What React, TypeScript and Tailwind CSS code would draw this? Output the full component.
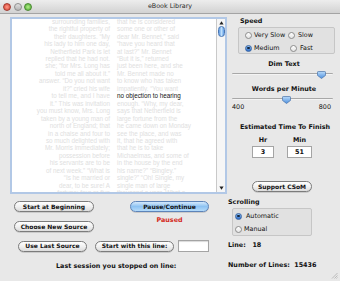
import React from "react";

const UI = { fontFamily: '"DejaVu Sans", "Liberation Sans", sans-serif' };
const BOOK = { fontFamily: '"Liberation Sans", Arial, sans-serif' };

const lines: [string, string][] = [
  ["this truth is so well", "fixed in the minds of the"],
  ["surrounding families,", "that he is considered"],
  ["the rightful property of", "some one or other of"],
  ["their daughters. \u201cMy", "dear Mr. Bennet,\u201d said"],
  ["his lady to him one day,", "\u201chave you heard that"],
  ["Netherfield Park is let", "at last?\u201d Mr. Bennet"],
  ["replied that he had not.", "\u201cBut it is,\u201d returned"],
  ["she; \u201cfor Mrs. Long has", "just been here, and she"],
  ["told me all about it.\u201d", "Mr. Bennet made no"],
  ["answer. \u201cDo you not want", "to know who has taken"],
  ["it?\u201d cried his wife", "impatiently. \u201cYou want"],
  ["to tell me, and I have", "no objection to hearing"],
  ["it.\u201d This was invitation", "enough. \u201cWhy, my dear,"],
  ["you must know, Mrs. Long", "says that Netherfield is"],
  ["taken by a young man of", "large fortune from the"],
  ["north of England; that", "he came down on Monday"],
  ["in a chaise and four to", "see the place, and was"],
  ["so much delighted with", "it, that he agreed with"],
  ["Mr. Morris immediately;", "that he is to take"],
  ["possession before", "Michaelmas, and some of"],
  ["his servants are to be", "in the house by the end"],
  ["of next week.\u201d \u201cWhat is", "his name?\u201d \u201cBingley.\u201d"],
  ["\u201cIs he married or", "single?\u201d \u201cOh! Single, my"],
  ["dear, to be sure! A", "single man of large"],
  ["fortune; four or five", "thousand a year. What a"],
];

function Radio({ checked }: { checked?: boolean }) {
  return checked ? (
    <span className="w-[7px] h-[7px] shrink-0 rounded-full bg-linear-to-b from-[#8cc0f2] to-[#2e6cc9] border border-[#3a66a3] flex items-center justify-center">
      <span className="w-[2.5px] h-[2.5px] rounded-full bg-[#15243a]" />
    </span>
  ) : (
    <span className="w-[7px] h-[7px] shrink-0 rounded-full bg-linear-to-b from-white to-[#e4e4e4] border border-[#8c8c8c]" />
  );
}

function Btn({ label, cls, blue }: { label: string; cls: string; blue?: boolean }) {
  return (
    <div
      className={
        "h-[11px] rounded-full border flex items-center justify-center text-[6px] font-bold leading-none text-[#111] shadow-[0_0.5px_0.5px_rgba(0,0,0,0.25)] " +
        (blue
          ? "border-[#5d84b9] bg-linear-to-b from-[#d4e9fc] via-[#8ec3f2] to-[#b5dbfa] "
          : "border-[#7c7c7c] bg-linear-to-b from-white via-[#f1f1f1] to-[#dcdcdc] ") +
        cls
      }
    >
      {label}
    </div>
  );
}

function Thumb() {
  return (
    <svg width="9" height="8" viewBox="0 0 9 8" className="block">
      <defs>
        <linearGradient id="tg" x1="0" y1="0" x2="0" y2="1">
          <stop offset="0" stopColor="#b9dbfb" />
          <stop offset="1" stopColor="#4d8fdd" />
        </linearGradient>
      </defs>
      <path d="M0.5 1.2 Q0.5 0.5 1.2 0.5 H7.8 Q8.5 0.5 8.5 1.2 V4.4 L4.5 7.5 L0.5 4.4 Z" fill="url(#tg)" stroke="#4a72a8" strokeWidth="0.7" />
    </svg>
  );
}

function Slider({ pos }: { pos: number }) {
  return (
    <div className="relative ml-[4px] w-[101px] h-[9px]">
      <div className="absolute left-0 right-0 top-[3.5px] h-[2px] rounded-full bg-[#a8a8a8] border-b border-[#f4f4f4]" />
      <div className="absolute top-[2px]" style={{ left: pos }}>
        <Thumb />
      </div>
    </div>
  );
}

export default function App() {
  return (
    <div className="w-[340px] h-[281px] bg-[#e8e8e8] flex flex-col overflow-hidden text-[#111]" style={UI}>
      {/* Title bar */}
      <div className="relative h-[14px] shrink-0 bg-linear-to-b from-[#ededed] to-[#d2d2d2] border-b border-[#a4a4a4] flex items-center">
        <div className="flex items-center gap-[2.5px] pl-[3px]">
          <span className="w-[8px] h-[8px] rounded-full bg-radial from-[#ff9a8a] to-[#d2372a] border border-[#a23a30]" />
          <span className="w-[8px] h-[8px] rounded-full bg-linear-to-b from-[#e0e0e0] to-[#b4b4b4] border border-[#8f8f8f]" />
          <span className="w-[8px] h-[8px] rounded-full bg-radial from-[#b6f08a] to-[#3fa52a] border border-[#4c8a33]" />
        </div>
        <div className="absolute inset-0 flex items-center justify-center text-[6.4px] text-[#2a2a2a] leading-none">
          eBook Library
        </div>
      </div>

      <div className="flex flex-1">
        {/* Left column */}
        <div className="w-[228px] flex flex-col">
          <div className="mt-[3px] ml-[10px] w-[217px] h-[177px] border-2 border-[#b2c8e6] bg-white flex overflow-hidden">
            <div className="flex-1 overflow-hidden" style={BOOK}>
              <div className="mt-[-8.7px] text-[6.3px] leading-[7.45px] whitespace-nowrap">
                {lines.map(([l, r], i) => (
                  <div key={i} className="flex">
                    <div className="w-[98px] text-right text-[#e0e0e0]">{l}</div>
                    <div className={"ml-[7px] " + (i === 11 ? "text-[#111]" : "text-[#e0e0e0]")}>{r}</div>
                  </div>
                ))}
              </div>
            </div>
            <div className="w-[9px] shrink-0 border-l border-[#c9c9c9] bg-[#f6f6f6] flex flex-col items-center">
              <svg width="5" height="4" viewBox="0 0 5 4" className="mt-[2px]">
                <path d="M2.5 0.3 L4.6 3.6 H0.4 Z" fill="#222" />
              </svg>
              <div className="mt-[1px] w-[7px] h-[11px] rounded-full bg-linear-to-r from-[#5d9ae3] via-[#bfe0fc] to-[#5d9ae3] border border-[#4a76b2]" />
              <div className="flex-1" />
              <svg width="5" height="4" viewBox="0 0 5 4" className="mb-[2px]">
                <path d="M2.5 3.7 L4.6 0.4 H0.4 Z" fill="#222" />
              </svg>
            </div>
          </div>

          {/* Row 1 */}
          <div className="flex mt-[7px]">
            <Btn label="Start at Beginning" cls="ml-[14px] w-[80px]" />
            <Btn label="Pause/Continue" cls="ml-[36px] w-[79px]" blue />
          </div>
          {/* Row 2 */}
          <div className="flex h-[20px]">
            <Btn label="Choose New Source" cls="mt-[9px] ml-[14px] w-[80px]" />
            <div className="mt-[4px] ml-[36px] w-[79px] text-center text-[6.4px] leading-[8px] font-bold text-[#d42a1c]">
              Paused
            </div>
          </div>
          {/* Row 3 */}
          <div className="flex items-center mt-[8px]">
            <Btn label="Use Last Source" cls="ml-[18px] w-[69px]" />
            <Btn label="Start with this line:" cls="ml-[8px] w-[79px]" />
            <div className="ml-[4px] w-[31px] h-[12px] bg-white border border-[#a4a4a4] shadow-[inset_0_1px_1px_rgba(0,0,0,0.15)]" />
          </div>
          {/* Row 4 */}
          <div className="mt-[10px] ml-[56px] text-[6.4px] leading-[8px] font-bold">
            Last session you stopped on line:
          </div>
        </div>

        {/* Right column */}
        <div className="flex-1 flex flex-col text-[6.4px] leading-[8px]">
          <div className="mt-[3px] ml-[12px] font-bold">Speed</div>
          <div className="mt-[2px] ml-[10px] w-[97px] h-[27px] border border-[#c6c6c6] bg-[#e1e1e1] rounded-[2px] pl-[6px] pt-[3px]">
            <div className="grid grid-cols-[43px_1fr] gap-y-[5px]">
              <div className="flex items-center gap-[2px] h-[8px]"><Radio />Very Slow</div>
              <div className="flex items-center gap-[3px] h-[8px]"><Radio />Slow</div>
              <div className="flex items-center gap-[2px] h-[8px]"><Radio checked />Medium</div>
              <div className="flex items-center gap-[3px] h-[8px] pl-[2px]"><Radio />Fast</div>
            </div>
          </div>

          <div className="mt-[6px] text-center font-bold">Dim Text</div>
          <div className="mt-[1px]">
            <Slider pos={85} />
          </div>

          <div className="mt-[7px] text-center font-bold">Words per Minute</div>
          <div className="mt-[1px]">
            <Slider pos={50} />
          </div>
          <div className="flex justify-between pl-[4px] pr-[9px]">
            <span>400</span>
            <span>800</span>
          </div>

          <div className="mt-[12px] ml-[12px] font-bold">Estimated Time To Finish</div>
          <div className="mt-[5px] flex">
            <div className="ml-[24px] w-[22px] flex flex-col items-center">
              <div className="font-bold">Hr</div>
              <div className="mt-[2px] w-[22px] h-[12px] bg-white border border-[#a4a4a4] flex items-center justify-center font-bold">3</div>
            </div>
            <div className="ml-[13px] w-[25px] flex flex-col items-center">
              <div className="font-bold">Min</div>
              <div className="mt-[2px] w-[25px] h-[12px] bg-white border border-[#a4a4a4] flex items-center justify-center font-bold">51</div>
            </div>
          </div>

          <Btn label="Support CSoM" cls="mt-[23px] ml-[24px] w-[60px]" />

          <div className="mt-[6px] font-bold">Scrolling</div>
          <div className="mt-[2px] ml-[4px] w-[80px] h-[28px] border border-[#c6c6c6] bg-[#e1e1e1] rounded-[2px] pl-[2px] pt-[3px] flex flex-col gap-[5px]">
            <div className="flex items-center gap-[4px] h-[8px]"><Radio checked />Automatic</div>
            <div className="flex items-center gap-[2px] h-[8px]"><Radio />Manual</div>
          </div>

          <div className="mt-[5px] font-bold whitespace-pre">Line:   18</div>
          <div className="mt-[12px] font-bold whitespace-pre">Number of Lines:  15436</div>
          <div className="flex-1 flex justify-end items-end pr-[2px] pb-[2px]">
            <svg width="7" height="7" viewBox="0 0 7 7">
              <path d="M6.5 1 L1 6.5 M6.5 3.5 L3.5 6.5 M6.5 5.5 L5.5 6.5" stroke="#9a9a9a" strokeWidth="0.6" />
            </svg>
          </div>
        </div>
      </div>
    </div>
  );
}
